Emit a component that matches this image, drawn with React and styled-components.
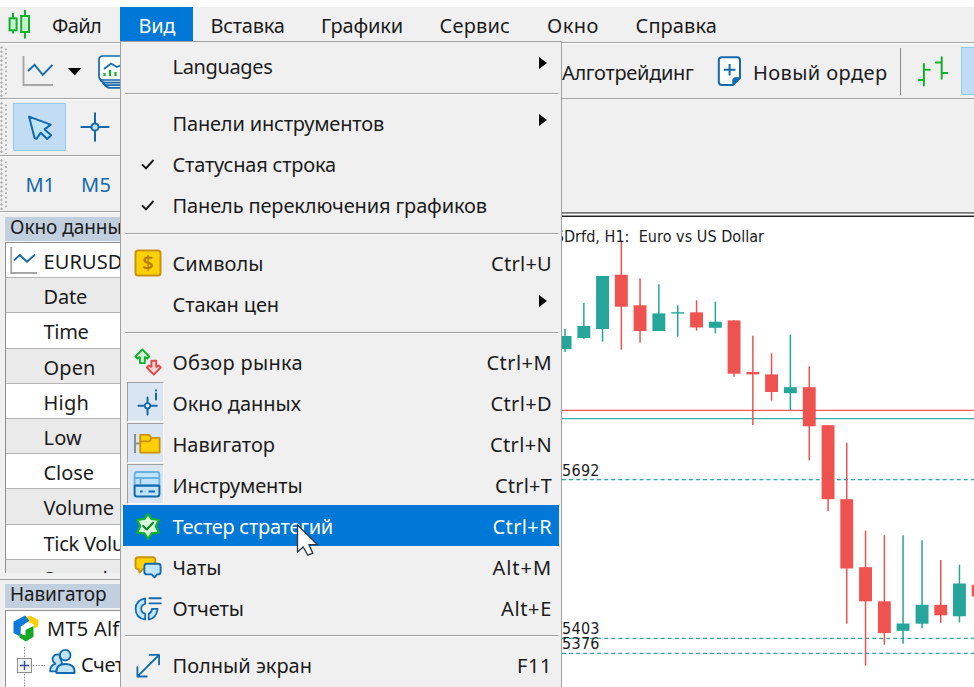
// src/App.jsx

import React, { useLayoutEffect, useRef, useState } from 'react';
import styled, { createGlobalStyle, css } from 'styled-components';

const GlobalStyle = createGlobalStyle`
    * {
        box-sizing: border-box;
    }

    body {
        margin: 0;
        overflow: hidden;
        background: #ffffff;
        font-family: 'Noto Sans', 'Open Sans', sans-serif;
        font-size: 20px;
        color: #1b1b1b;
    }
`;

const Window = styled.div`
    position: relative;
    display: flex;
    flex-direction: column;
    width: 974px;
    height: 687px;
    padding-top: 7px;
    overflow: hidden;
    background: #ffffff;
`;

const TextSpan = styled.span`
    display: inline-block;
    white-space: pre;
    line-height: 28px;
`;

const MenuBar = styled.nav`
    display: flex;
    flex: none;
    height: 36px;
    background: #f0f0f0;
    border-bottom: 1px solid #a5a5a5;
`;

const AppLogo = styled.div`
    flex: none;
    width: 52px;
    padding: 2px 0 0 6px;
`;

const MenuBarItem = styled.div`
    flex: none;
    width: ${({ $width }) => $width}px;
    height: 34px;
    padding: 5px 0 0 ${({ $pad }) => $pad || 0}px;
    color: ${({ $open }) => ($open ? '#ffffff' : 'inherit')};
    background: ${({ $open }) => ($open ? '#0078d7' : 'transparent')};
`;

const Toolbar = styled.div`
    display: flex;
    flex: none;
    height: ${({ $height }) => $height}px;
    background: #f0f0f0;
    border-top: 1px solid #ffffff;
    border-bottom: 1px solid #a5a5a5;
`;

const ToolbarDock = styled.div`
    display: flex;
    flex-direction: column;
    flex: none;
    padding-right: 412px;
    background: #f0f0f0;
`;

const Grip = styled.div`
    flex: none;
    width: 8px;
    margin: 2px 0 1px;
    background-image:
        radial-gradient(circle at 1.5px 1.5px, #b4b4b4 1px, transparent 1.4px),
        radial-gradient(circle at 6px 3.5px, #b4b4b4 1px, transparent 1.4px);
    background-size: 8px 4.4px;
`;

const ToolbarLeft = styled.div`
    display: flex;
    flex: none;
    width: 562px;
`;

const ToolbarRight = styled.div`
    display: flex;
    flex: 1;
    overflow: hidden;
`;

const ToolSlot = styled.div`
    flex: none;
    width: ${({ $width }) => $width}px;
    padding: ${({ $padding }) => $padding};
    color: ${({ $color }) => $color || 'inherit'};

    svg {
        display: block;
    }
`;

const ToolButton = styled.div`
    flex: none;
    width: 53px;
    height: 48px;
    margin: ${({ $margin }) => $margin};
    padding: 10px 0 0 13px;
    background: #c2ddf3;
    border: 1px solid #91c9f7;
`;

const Divider = styled.div`
    flex: none;
    width: 1px;
    height: 47px;
    margin: 4px 17px 0 0;
    background: #8c8c8c;
`;

const Workspace = styled.div`
    display: flex;
    flex: 1;
    min-height: 0;
`;

const SideColumn = styled.aside`
    display: flex;
    flex-direction: column;
    flex: none;
    width: 562px;
    background: #f0f0f0;
    border-top: 1px solid #ffffff;
`;

const PanelTitle = styled.div`
    display: flex;
    flex: none;
    height: 24px;
    margin: 4px 0 ${({ $gap }) => $gap}px 5px;
    padding-left: 5px;
    font-size: 19px;
    background: #c1cfde;

    span {
        line-height: 21px;
    }
`;

const DataGrid = styled.div`
    flex: none;
    height: 330.6px;
    margin-left: 5px;
    overflow: hidden;
    border-top: 1px solid #909090;
    border-left: 1px solid #909090;
`;

const DataRow = styled.div`
    display: flex;
    height: 35.2px;
    padding: 5px 0 0 ${({ $icon }) => ($icon ? 3.5 : 37.5)}px;
    background: ${({ $shaded }) => ($shaded ? '#eaeaea' : '#ffffff')};
    border-bottom: 1px solid #b4b4b4;

    svg {
        flex: none;
        margin: -1px 6px 0 0;
    }
`;

const PanelSplit = styled.div`
    flex: none;
    height: 7px;
    border-bottom: 1px solid #a0a0a0;
`;

const Tree = styled.div`
    flex: 1;
    margin-left: 5px;
    background: #ffffff;
    border-top: 1px solid #909090;
    border-left: 1px solid #909090;
`;

const TreeRow = styled.div`
    display: flex;
    height: 36px;
    padding-left: ${({ $indent }) => $indent}px;

    svg {
        flex: none;
        margin-right: ${({ $gap }) => $gap}px;
    }

    span {
        line-height: 36px;
    }
`;

const ChartArea = styled.main`
    flex: 1;
    background: #ffffff;

    svg {
        display: block;
    }
`;

const Popup = styled.div`
    position: absolute;
    top: 41px;
    left: 120px;
    width: 442px;
    height: 660px;
    padding: 2.6px 2px 0;
    background: #f0f0f0;
    border: 1px solid #a0a0a0;
`;

const PopupItem = styled.div`
    display: flex;
    height: 41px;
    color: ${({ $selected }) => ($selected ? '#ffffff' : 'inherit')};
    background: ${({ $selected }) => ($selected ? '#0078d7' : 'transparent')};

    span {
        line-height: 43.6px;
    }
`;

const IconCell = styled.div`
    flex: none;
    width: 37px;
    height: 40px;
    margin: 0 8.5px 0 4px;
    padding: 6px 0 0 6px;
    border: 1px solid transparent;

    ${({ $pressed }) =>
        $pressed &&
        css`
            padding: 5px 0 0 5px;
            background: #d9e5f2;
            border-color: #a0a0a0 #ffffff #ffffff #a0a0a0;
        `}

    svg {
        display: block;
    }
`;

const Shortcut = styled.div`
    flex: 1;
    padding-right: 7px;
    text-align: right;
`;

const SubmenuArrow = styled.div`
    width: 0;
    height: 0;
    margin: 12px 12px 0 auto;
    border: 6.5px solid transparent;
    border-left: 8px solid #000000;
    border-right: 0;
`;

const Separator = styled.hr`
    height: 2px;
    margin: 7.7px 1px 7px 2px;
    border: 0;
    border-top: 1px solid #a0a0a0;
    border-bottom: 1px solid #ffffff;
`;

const Pointer = styled.svg`
    position: absolute;
    top: 522px;
    left: 295px;
`;

// Spreads the letters so that the caption takes exactly the given width.
const Caption = ({ children, width }) => {
    const ref = useRef(null);
    const [spacing, setSpacing] = useState(0);

    useLayoutEffect(() => {
        const natural = ref.current.getBoundingClientRect().width;
        setSpacing((width - natural) / children.length);
    }, []);

    return (
        <TextSpan ref={ref} style={{ letterSpacing: `${spacing}px` }}>
            {children}
        </TextSpan>
    );
};

const BLUE = '#1269ab';
const SKY = '#c0e4fc';
const GREEN = '#0fb02c';

const Icon = ({ children, size = 28 }) => (
    <svg width={size} height={size} viewBox={`0 0 ${size} ${size}`} fill="none" strokeLinejoin="round" strokeLinecap="round">
        {children}
    </svg>
);

const CheckIcon = () => (
    <Icon>
        <path d="M8 14.4 L12 18.4 L19.6 9.8" stroke="#111111" strokeWidth="2" strokeLinecap="butt" strokeLinejoin="miter" />
    </Icon>
);

const SymbolsIcon = () => (
    <Icon>
        <rect x="1.5" y="1.5" width="25" height="25" rx="2.5" fill="#ffd000" stroke="#cb9010" strokeWidth="2" />
        <text x="14" y="21" textAnchor="middle" fontSize="20" fontWeight="600" fill="#b97c0c">$</text>
    </Icon>
);

const MarketIcon = () => (
    <Icon>
        <path d="M8.3 1.4 L15.2 8.5 L13.3 10.5 L10.8 9.1 V15.1 H5.9 V9.1 L3.3 10.5 L1.4 8.5Z" fill="#d3f7d6" stroke={GREEN} strokeWidth="1.9" />
        <path d="M19.8 26.6 L26.7 19.5 L24.8 17.5 L22.3 18.9 V12.7 H17.4 V18.9 L14.8 17.5 L12.9 19.5Z" fill="#fbd5d5" stroke="#e24848" strokeWidth="1.9" />
    </Icon>
);

const DataWindowIcon = () => (
    <Icon>
        <path d="M5.5 17.8 H11.2 M17.8 17.8 H23.7 M14.5 9.4 V15 M14.5 20.8 V26.6 M23 5.6 V11.6" stroke={BLUE} strokeWidth="2" />
        <circle cx="14.5" cy="17.8" r="2.7" fill="#ffffff" stroke={BLUE} strokeWidth="1.8" />
        <circle cx="23" cy="2.4" r="1.1" fill={BLUE} />
    </Icon>
);

const NavigatorIcon = () => (
    <Icon>
        <path d="M2 5 V24 M2 14.6 H7" stroke="#8a8f94" strokeWidth="2" strokeLinecap="butt" />
        <path d="M7.2 23.6 V5.8 H16 L18.4 8.9 H26.6 V23.6Z" fill="#ffd000" stroke="#cb9010" strokeWidth="1.8" />
        <path d="M7.4 12.4 H15.6 Q17.6 12.2 18.2 9.2" stroke="#cb9010" strokeWidth="1.8" />
    </Icon>
);

const ToolboxIcon = () => (
    <Icon>
        <path d="M1.6 15 V4.5 Q1.6 2 4 2 H24 Q26.4 2 26.4 4.5 V15Z" fill={SKY} stroke="#67b0e2" strokeWidth="1.8" />
        <path d="M2 8 H26 M7.5 8 V15" stroke="#67b0e2" strokeWidth="1.8" />
        <path d="M1.6 15.8 H26.4 V24 Q26.4 26.5 24 26.5 H4 Q1.6 26.5 1.6 24Z" fill={SKY} stroke={BLUE} strokeWidth="2" />
        <path d="M7 21.5 H9.6 M15.5 21.5 H22 M12.6 21.5 H12.8" stroke={BLUE} strokeWidth="1.8" strokeLinecap="butt" />
    </Icon>
);

const TesterIcon = () => (
    <Icon>
        <path d="M14 1.8 L17.6 7 L25 7.8 L21.8 14.2 L25 20.6 L17.6 21.4 L14 26.8 L10.4 21.4 L3 20.6 L6.2 14.2 L3 7.8 L10.4 7Z" fill="#d9f9dd" stroke={GREEN} strokeWidth="2.2" />
        <path d="M9.2 14 L12.8 17.5 L19 10.8" stroke="#08861c" strokeWidth="2" />
    </Icon>
);

const ChatsIcon = () => (
    <Icon>
        <path d="M4 4.2 H18.5 Q21.3 4.2 21.3 6.8 V13.6 Q21.3 16.2 18.5 16.2 H8.6 L5.6 19.6 L4.6 16.2 Q1.5 16.2 1.5 13.6 V6.8 Q1.5 4.2 4 4.2Z" fill="#ffd000" stroke="#cb9010" strokeWidth="1.9" />
        <path d="M13 10.8 H24 Q26.6 10.8 26.6 13.2 V19 Q26.6 21.4 24 21.4 H23 L20.6 24.3 L17.6 21.4 H13 Q10.4 21.4 10.4 19 V13.2 Q10.4 10.8 13 10.8Z" fill={SKY} stroke={BLUE} strokeWidth="1.9" />
    </Icon>
);

const ReportsIcon = () => (
    <Icon>
        <path d="M11.2 4.3 Q1.6 6 1.6 14.8 Q1.6 24 11.2 25.6 V19.8 Q7.2 18.6 7.2 14.8 Q7.2 11 11.2 10Z" fill={SKY} stroke={BLUE} strokeWidth="1.7" />
        <path d="M14.7 25.6 Q22.6 24 23.6 14.8 H18 Q17.6 18.6 14.7 19.8Z" fill={SKY} stroke={BLUE} strokeWidth="1.7" />
        <path d="M15.4 4.3 H26.8 M15.4 9.4 H26.8" stroke={BLUE} strokeWidth="1.9" />
    </Icon>
);

const FullScreenIcon = () => (
    <Icon>
        <path d="M3.5 25.4 L25 4 M15.6 3.9 H25.1 V13.4 M3.4 16.2 V25.5 H12.8" stroke={BLUE} strokeWidth="1.8" />
    </Icon>
);

const LineChartIcon = () => (
    <svg width="31" height="30" viewBox="0 0 31 30" fill="none">
        <path d="M1.5 0 V29 H31" stroke="#a6a6a6" strokeWidth="1.8" />
        <path d="M6 15 L12.6 8.8 L20.8 18.8 L30.4 9" stroke={BLUE} strokeWidth="1.9" />
    </svg>
);

const ChartStackIcon = () => (
    <svg width="36" height="34" viewBox="0 0 36 34" fill="none" stroke={BLUE} strokeWidth="1.7">
        <path d="M2 23 Q2.6 27 6.6 27.6 H36 M4 26 Q5 30 9 30.2 H36 M6 29 Q8 32.6 12 32.8 H36" />
        <path d="M36 1 H5 Q1 1 1 5 V21 Q1 25 5 25 H36Z" fill="#ffffff" />
        <path d="M6 14 L13 8.6 L19 12 L28 8" />
        <path d="M6.5 21 V18 M12 21 V15 M17.5 21 V17 M23 21 V14" stroke={GREEN} strokeWidth="2.2" />
    </svg>
);

const ArrowToolIcon = () => (
    <Icon>
        <path d="M2 2.6 L23.7 10.6 L17.6 15.4 L24.2 21.2 L20.2 25 L13.8 18.7 L9.4 24.8 L7.6 24Z" fill={SKY} stroke={BLUE} strokeWidth="2" />
    </Icon>
);

const CrosshairIcon = () => (
    <Icon size={30}>
        <path d="M0.6 15 H11 M19 15 H29.4 M15 0.6 V11 M15 19 V29.4" stroke={BLUE} strokeWidth="2" strokeLinecap="butt" />
        <circle cx="15" cy="15" r="3.6" fill={SKY} stroke={BLUE} strokeWidth="2" />
    </Icon>
);

const NewOrderIcon = () => (
    <Icon size={30}>
        <path d="M5 1.3 H20 Q23 1.3 23 4.3 V21.8 L15.8 29 H5 Q1.8 29 1.8 26 V4.3 Q1.8 1.3 5 1.3Z" fill="#ffffff" stroke={BLUE} strokeWidth="2" />
        <path d="M23 21.8 H18 Q15.8 21.8 15.8 24.2 V29Z" fill={BLUE} stroke={BLUE} />
        <path d="M6.8 13.8 H18.4 M12.6 8 V19.6" stroke={BLUE} strokeWidth="2" strokeLinecap="butt" />
    </Icon>
);

const BarsIcon = () => (
    <Icon size={31}>
        <path d="M5.9 8 V29.6 M0.9 24 H5.9 M5.9 13.7 H11.7 M23.7 1.2 V22.8 M17.8 6.4 H23.7 M23.7 17 H29.4" stroke={GREEN} strokeWidth="2" />
    </Icon>
);

const LogoIcon = () => (
    <svg width="26" height="31" viewBox="0 0 26 31" stroke={GREEN} strokeWidth="2" fill="#c8f6cd">
        <path d="M7 4 V24.6 M19 1 V29.4" />
        <rect x="3.6" y="9.3" width="7" height="12" />
        <rect x="15.2" y="7" width="7.8" height="16" />
    </svg>
);

const TerminalIcon = () => (
    <svg width="28" height="32" viewBox="0 -4 28 32">
        <path d="M14 2.4 L18 0.6 L26.3 4.8 V11.5 L21.8 13.8 V9.6 L13.5 5.8Z" fill="#ffcf0a" />
        <path d="M1.5 6.8 L13 0.6 L17.4 5.8 L8.8 11.6 L8.6 18.6 L7 21 L1.5 18Z" fill="#0f79d9" />
        <path d="M21.5 11 V21.8 L14 26.4 L7.3 22.6 V18.6 L13.5 20.6 V15Z" fill="#15a625" />
    </svg>
);

const AccountsIcon = () => (
    <svg width="28" height="32" viewBox="0 -2 28 32" fill={SKY} stroke={BLUE} strokeWidth="1.8" strokeLinejoin="round">
        <path d="M8.6 22.4 H1.2 Q0.8 16.4 6.4 14.8 Q3 12.4 3.6 9 Q4.8 5 10 5.4 L13 14Z" />
        <path d="M7.4 24 Q6.6 15 16.4 15 Q26.2 15 25.6 24Z" />
        <circle cx="16.2" cy="6.2" r="5.3" />
    </svg>
);

const TreeExpander = () => (
    <svg width="30" height="44" viewBox="0 0 30 44" fill="none">
        <path d="M9.5 0 V11 M9.5 27 V44 M18 18.5 H30" stroke="#8c8c8c" strokeDasharray="1.4 1.4" />
        <rect x="2.5" y="11.5" width="14" height="14" fill="#f3f3f3" stroke="#8e8e8e" />
        <path d="M5 18.5 H14 M9.5 14 V23" stroke="#3b4f96" strokeWidth="1.4" />
    </svg>
);

const menuBar = [
    { label: 'Файл', width: 68, text: 49 },
    { label: 'Вид', width: 72.5, text: 36.5, pad: 18.5, open: true },
    { label: 'Вставка', width: 128.5, text: 74, pad: 18 },
    { label: 'Графики', width: 118.5, text: 82 },
    { label: 'Сервис', width: 107.5, text: 70.5 },
    { label: 'Окно', width: 88.5, text: 52 },
    { label: 'Справка', width: 120, text: 81.5 },
];

const viewMenu = [
    { label: 'Languages', width: 100, submenu: true },
    null,
    { label: 'Панели инструментов', width: 211.5, submenu: true },
    { label: 'Статусная строка', width: 163.5, icon: <CheckIcon /> },
    { label: 'Панель переключения графиков', width: 314.5, icon: <CheckIcon /> },
    null,
    { label: 'Символы', width: 91, icon: <SymbolsIcon />, keys: 'Ctrl+U', keysWidth: 61 },
    { label: 'Стакан цен', width: 106.5, submenu: true },
    null,
    { label: 'Обзор рынка', width: 130.5, icon: <MarketIcon />, keys: 'Ctrl+M', keysWidth: 65.5 },
    { label: 'Окно данных', width: 128.5, icon: <DataWindowIcon />, pressed: true, keys: 'Ctrl+D', keysWidth: 61.5 },
    { label: 'Навигатор', width: 102.5, icon: <NavigatorIcon />, pressed: true, keys: 'Ctrl+N', keysWidth: 62 },
    { label: 'Инструменты', width: 130, icon: <ToolboxIcon />, pressed: true, keys: 'Ctrl+T', keysWidth: 57 },
    { label: 'Тестер стратегий', width: 160.5, icon: <TesterIcon />, selected: true, keys: 'Ctrl+R', keysWidth: 59.5 },
    { label: 'Чаты', width: 49, icon: <ChatsIcon />, keys: 'Alt+M', keysWidth: 59.5 },
    { label: 'Отчеты', width: 71.5, icon: <ReportsIcon />, keys: 'Alt+E', keysWidth: 51 },
    null,
    { label: 'Полный экран', width: 139.5, icon: <FullScreenIcon />, keys: 'F11', keysWidth: 35 },
];

const dataRows = [
    ['Date', 43.5],
    ['Time', 45],
    ['Open', 52],
    ['High', 45.5],
    ['Low', 38.5],
    ['Close', 50.5],
    ['Volume', 70.5],
    ['Tick Volume', 110],
    ['Spread', 64],
];

// x, high, low, body top, body bottom, rising
const candles = [
    [565, 329, 352, 336, 349, true],
    [583.8, 303, 339, 326, 338, true],
    [602.5, 276, 341.7, 276, 329, true],
    [621.3, 242, 349.7, 274.7, 306.7, false],
    [640, 278.3, 342.7, 305.3, 331, false],
    [658.8, 284.3, 331, 313.4, 331, true],
    [677.7, 305.3, 336.7, 312.2, 313.6, true],
    [696.5, 300.3, 330.7, 312.3, 327.5, false],
    [715.3, 301.7, 333.3, 321.7, 327.8, true],
    [734, 320.4, 376.7, 320.4, 373.7, false],
    [752.8, 335.7, 425, 372, 374.4, false],
    [771.5, 353.3, 400.7, 374.4, 392, false],
    [790.3, 334.7, 410.3, 387.2, 393.2, true],
    [809.2, 366.3, 460.5, 387.2, 426.3, false],
    [828, 425.2, 511, 425.2, 499.2, false],
    [846.7, 442.7, 623.7, 499.2, 568.5, false],
    [865.5, 530.7, 665.8, 567.2, 601.3, false],
    [884.3, 535.3, 644.7, 601.3, 633, false],
    [903, 535.3, 643.7, 623.5, 630.8, true],
    [922, 540.2, 628.3, 604.8, 623.7, true],
    [940.7, 560, 622.7, 604.8, 615.3, false],
    [959.4, 564.7, 622.5, 583.5, 616.3, true],
    [978.2, 584.8, 596.5, 584.8, 596.5, false],
];

const levels = [
    { y: 479.6, label: '5692', base: 475.7 },
    { y: 638.4, label: '5403', base: 634.3 },
    { y: 653.4, label: '5376', base: 649.4 },
];

const Chart = () => (
    <svg width="412" height="475" viewBox="562 212 412 475">
        <path d="M562 212.8 H974" stroke="#777777" strokeWidth="1.7" />
        <path d="M562 216.3 H974" stroke="#222222" strokeWidth="1.4" />
        {levels.map(({ y }) => (
            <path key={y} d={`M562 ${y} H974`} stroke="#2fa99d" strokeWidth="1.3" strokeDasharray="3.9 3.15" />
        ))}
        <path d="M562 410.4 H974" stroke="#f15a57" strokeWidth="1.3" />
        <path d="M562 418.6 H974" stroke="#35ada2" strokeWidth="1.3" />
        {candles.map(([x, high, low, top, bottom, rising]) => {
            const color = rising ? '#26a69a' : '#ef5350';
            return (
                <g key={x} fill={color}>
                    <rect x={x - 0.7} y={high} width="1.5" height={low - high} />
                    <rect x={x - 6.4} y={top} width="12.9" height={bottom - top} />
                </g>
            );
        })}
        <g fill="#1b1b1b" fontFamily="'DejaVu Sans Condensed', 'DejaVu Sans', sans-serif" fontSize="16">
            <text x="554.8" y="241.6" textLength="209.2">SDrfd, H1:&#160; Euro vs US Dollar</text>
            {levels.map(({ label, base }) => (
                <text key={label} x="562" y={base} textLength="37.5">{label}</text>
            ))}
        </g>
    </svg>
);

const ViewMenu = () => (
    <Popup>
        {viewMenu.map((item, index) =>
            item ? (
                <PopupItem key={item.label} $selected={item.selected}>
                    <IconCell $pressed={item.pressed}>{item.icon}</IconCell>
                    <Caption width={item.width}>{item.label}</Caption>
                    {item.keys && (
                        <Shortcut>
                            <Caption width={item.keysWidth}>{item.keys}</Caption>
                        </Shortcut>
                    )}
                    {item.submenu && <SubmenuArrow />}
                </PopupItem>
            ) : (
                <Separator key={index} />
            )
        )}
    </Popup>
);

const App = () => {
    return (
        <Window>
            <GlobalStyle />
            <MenuBar>
                <AppLogo>
                    <LogoIcon />
                </AppLogo>
                {menuBar.map(({ label, width, text, pad, open }) => (
                    <MenuBarItem key={label} $width={width} $pad={pad} $open={open}>
                        <Caption width={text}>{label}</Caption>
                    </MenuBarItem>
                ))}
            </MenuBar>

            <Toolbar $height={56}>
                <ToolbarLeft>
                    <Grip />
                    <ToolSlot $width={60} $padding="12px 0 0 14px">
                        <LineChartIcon />
                    </ToolSlot>
                    <ToolSlot $width={29} $padding="24px 0 0 0">
                        <svg width="14" height="8">
                            <path d="M0 0 H13.4 L6.7 7.6Z" />
                        </svg>
                    </ToolSlot>
                    <ToolSlot $width={40} $padding="11px 0 0 1px">
                        <ChartStackIcon />
                    </ToolSlot>
                </ToolbarLeft>
                <ToolbarRight>
                    <ToolSlot $width={155} $padding="15px 0 0 0">
                        <Caption width={131.5}>Алготрейдинг</Caption>
                    </ToolSlot>
                    <ToolSlot $width={36} $padding="12px 0 0 0">
                        <NewOrderIcon />
                    </ToolSlot>
                    <ToolSlot $width={147} $padding="15px 0 0 0">
                        <Caption width={134.5}>Новый ордер</Caption>
                    </ToolSlot>
                    <Divider />
                    <ToolSlot $width={43} $padding="12px 0 0 0">
                        <BarsIcon />
                    </ToolSlot>
                    <ToolButton $margin="3px 0 0 0" />
                </ToolbarRight>
            </Toolbar>

            <ToolbarDock>
                <Toolbar $height={57}>
                    <Grip />
                    <ToolButton $margin="3px 0 0 5px">
                        <ArrowToolIcon />
                    </ToolButton>
                    <ToolSlot $width={50} $padding="12px 0 0 14px">
                        <CrosshairIcon />
                    </ToolSlot>
                </Toolbar>
                <Toolbar $height={56}>
                    <Grip />
                    <ToolSlot $width={73} $padding="14px 0 0 17.5px" $color={BLUE}>
                        <Caption width={29.5}>M1</Caption>
                    </ToolSlot>
                    <ToolSlot $width={39} $padding="14px 0 0 0" $color={BLUE}>
                        <Caption width={30.5}>M5</Caption>
                    </ToolSlot>
                </Toolbar>
            </ToolbarDock>

            <Workspace>
                <SideColumn>
                    <PanelTitle $gap={1}>
                        <Caption width={121.5}>Окно данных</Caption>
                    </PanelTitle>
                    <DataGrid>
                        <DataRow $icon>
                            <svg width="28" height="28" viewBox="0 0 28 28" fill="none">
                                <path d="M1.2 0 V26 H27" stroke="#a6a6a6" strokeWidth="1.8" />
                                <path d="M4 13.4 L9.8 8 L17 14.8 L25 7.6" stroke={BLUE} strokeWidth="1.9" />
                            </svg>
                            <Caption width={79}>EURUSD</Caption>
                        </DataRow>
                        {dataRows.map(([label, width], index) => (
                            <DataRow key={label} $shaded={index % 2 === 0}>
                                <Caption width={width}>{label}</Caption>
                            </DataRow>
                        ))}
                    </DataGrid>
                    <PanelSplit />
                    <PanelTitle $gap={2}>
                        <Caption width={96.5}>Навигатор</Caption>
                    </PanelTitle>
                    <Tree>
                        <TreeRow $indent={6} $gap={7}>
                            <TerminalIcon />
                            <Caption width={72.5}>MT5 Alf</Caption>
                        </TreeRow>
                        <TreeRow $indent={9} $gap={4}>
                            <TreeExpander />
                            <AccountsIcon />
                            <Caption width={43}>Счет</Caption>
                        </TreeRow>
                    </Tree>
                </SideColumn>
                <ChartArea>
                    <Chart />
                </ChartArea>
            </Workspace>

            <ViewMenu />

            <Pointer width="26" height="36" viewBox="0 0 26 36">
                <path d="M2.5 3 V30 L8.2 25 L12.8 33.2 L17.8 31.2 L14 22.6 H22.4Z" fill="#ffffff" stroke="#2c3440" strokeWidth="1.3" />
            </Pointer>
        </Window>
    );
};

export default App;
